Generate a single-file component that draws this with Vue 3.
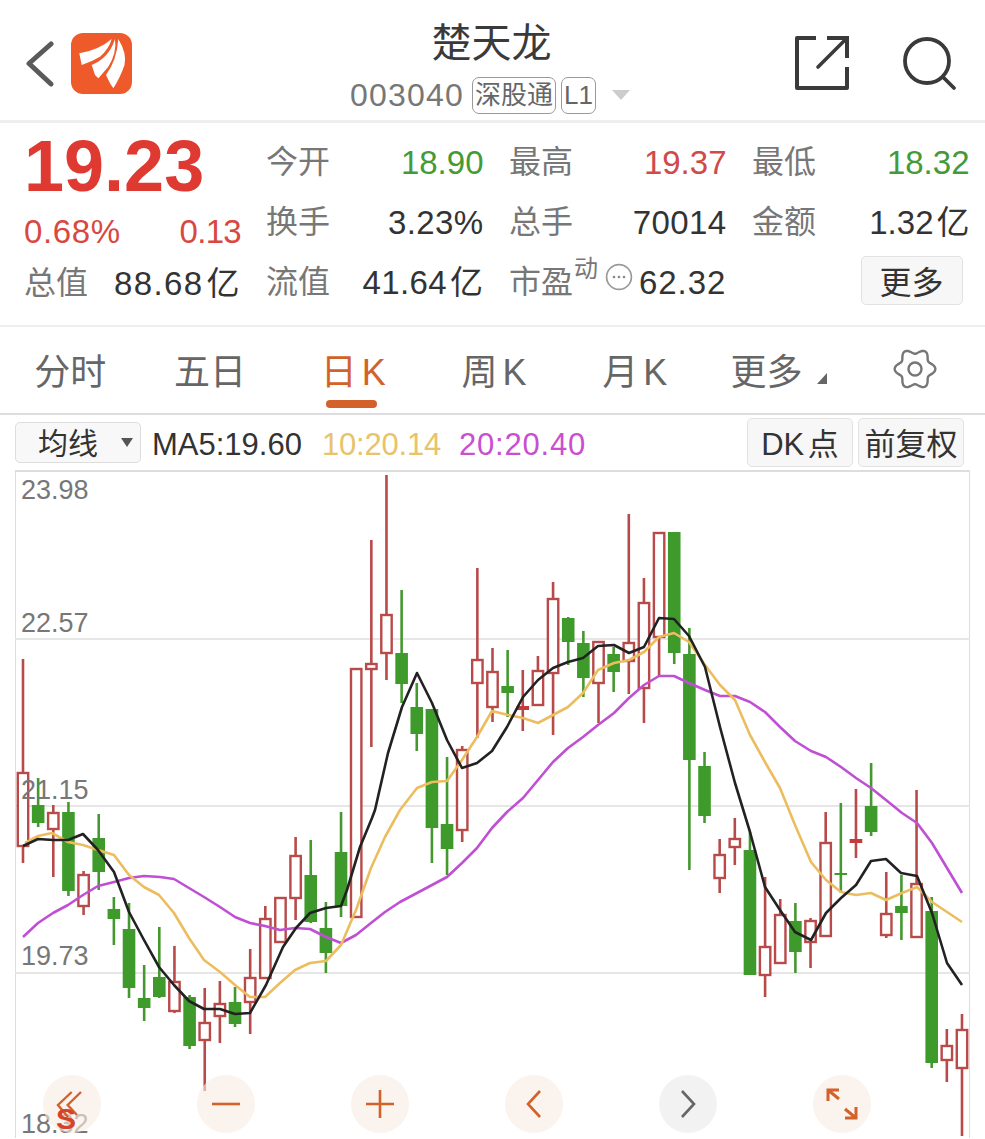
<script setup>
// high, bodyTop, bodyBottom, low, kind (0 green, 1 hollow red, 2 solid red)
const raw = [
  [659, 773, 846, 863, 1], [778, 805, 823, 827, 0], [805, 813, 829, 877, 1], [802, 812, 891, 896, 0],
  [871, 875, 906, 915, 1], [814, 838, 872, 890, 0], [897, 909, 919, 945, 0], [903, 929, 988, 998, 0],
  [965, 998, 1008, 1021, 0], [927, 977, 997, 998, 0], [946, 982, 1011, 1013, 1], [995, 997, 1046, 1049, 0],
  [988, 1023, 1040, 1091, 1], [981, 1004, 1016, 1043, 1], [987, 1002, 1024, 1027, 0], [949, 978, 1002, 1034, 1],
  [906, 919, 978, 978, 1], [898, 898, 942, 942, 1], [837, 856, 898, 920, 1], [840, 875, 922, 923, 0],
  [902, 928, 953, 973, 0], [812, 852, 906, 917, 0], [669, 669, 917, 917, 1], [540, 664, 669, 747, 1],
  [475, 615, 653, 680, 1], [590, 653, 684, 703, 0], [683, 707, 734, 751, 0], [709, 709, 828, 863, 0],
  [757, 824, 849, 875, 0], [746, 750, 830, 842, 1], [568, 660, 683, 738, 1], [648, 672, 707, 722, 1],
  [650, 686, 693, 717, 0], [670, 706, 710, 731, 2], [656, 671, 705, 705, 1], [582, 599, 673, 735, 1],
  [617, 618, 642, 665, 0], [631, 643, 678, 697, 0], [642, 642, 683, 723, 1], [647, 654, 672, 692, 0],
  [514, 643, 661, 694, 1], [578, 603, 688, 723, 1], [532, 533, 637, 676, 1], [532, 532, 653, 664, 0],
  [628, 654, 760, 870, 0], [752, 766, 816, 823, 0], [839, 855, 878, 893, 1], [818, 839, 847, 865, 1],
  [832, 850, 975, 975, 0], [877, 947, 975, 997, 1], [899, 915, 963, 963, 1], [903, 921, 952, 973, 0],
  [918, 921, 942, 968, 1], [812, 843, 936, 936, 1], [803, 873, 875, 893, 0], [789, 839, 843, 858, 2],
  [763, 806, 832, 836, 0], [872, 914, 935, 938, 1], [875, 906, 913, 940, 0], [790, 884, 937, 937, 1],
  [897, 911, 1063, 1068, 0], [1029, 1046, 1060, 1082, 1], [1014, 1030, 1068, 1136, 1],
]

const STEP = 15.145
const candles = raw.map((c, i) => ({
  x: 23 + STEP * i,
  high: c[0],
  top: c[1],
  bottom: c[2],
  low: c[3],
  kind: c[4] === 0 ? 'down' : c[4] === 2 ? 'solid' : 'up',
}))

const ma5 = '23,846 38,839 53,840 68,840 83,834 98,850 114,872 129,912 144,940 159,967 174,985 189,1001 204,1009 220,1009 235,1014 250,1013 266,985 283,947 296,928 310,913 326,908 341,906 347,890 360,847 372,818 375,810 388,753 402,707 417,673 432,703 447,740 462,768 477,763 492,751 507,727 523,697 538,680 553,668 568,662 583,658 598,646 614,645 629,653 644,647 659,618 674,619 689,636 705,667 720,727 735,783 750,832 765,887 780,910 795,932 811,940 826,913 841,898 856,885 871,861 886,859 901,873 917,876 932,913 947,963 962,985'
const ma10 = '25,843 38,836 52,833 68,842 83,845 98,850 114,855 129,875 144,887 159,895 174,913 189,938 204,960 220,972 235,985 250,997 265,997 280,983 295,970 310,963 326,961 341,945 356,910 371,868 385,837 400,810 417,788 432,782 447,781 462,760 477,737 492,711 508,715 523,718 538,723 553,715 568,707 583,693 598,670 614,663 629,660 644,652 659,637 674,633 689,642 705,665 720,685 735,700 750,735 765,762 780,788 795,825 811,862 826,880 841,892 856,895 871,893 886,900 902,893 917,887 932,902 947,912 962,922'
const ma20 = '23,937 38,923 53,913 68,905 83,895 98,886 114,882 129,878 144,876 160,877 174,879 189,888 204,897 220,907 235,917 250,923 265,926 280,930 295,928 310,929 326,937 341,943 356,935 371,923 385,912 400,902 417,893 432,885 447,877 462,863 477,848 492,828 507,812 523,798 538,780 553,762 568,748 583,737 598,725 614,713 629,698 644,685 659,676 674,676 689,683 705,690 720,696 735,696 750,702 765,712 780,727 795,741 811,751 826,757 841,767 856,778 871,788 886,800 902,813 917,823 932,843 947,868 962,893'

const grid = [639, 806, 973]
const axis = [
  { y: 499, label: '23.98' },
  { y: 632, label: '22.57' },
  { y: 799, label: '21.15' },
  { y: 965, label: '19.73' },
  { y: 1133, label: '18.32' },
]

// six soft lobes around the centre of the settings icon
function gearPath() {
  const pts = []
  for (let a = 0; a < 360; a += 5) {
    const t = (a * Math.PI) / 180
    const r = 17.8 + 2.6 * Math.cos(6 * t)
    pts.push((22 + r * Math.cos(t)).toFixed(2) + ' ' + (20 + r * Math.sin(t)).toFixed(2))
  }
  return 'M' + pts.join(' L') + ' Z'
}
const gear = gearPath()
</script>

<template>
  <div class="page">
    <header class="head">
      <svg class="back" width="30" height="48" viewBox="0 0 30 48">
        <path d="M27 4 L5 23.5 L27 44" fill="none" stroke="#5a5a5a" stroke-width="5" stroke-linecap="round" stroke-linejoin="round" />
      </svg>
      <svg class="logo" width="61" height="61" viewBox="0 0 61 61">
        <rect width="61" height="61" rx="12" fill="#ef5a2a" />
        <path d="M8.3 20.3 Q28 17 40.7 6 Q38 16 29 23.7 Q20 29 10.7 32 Z" fill="#fff" />
        <path d="M20.7 32 Q38 25 44 6 Q46 20 37.3 33.7 Q32 40 27.3 45.3 L24 42 Z" fill="#fff" />
        <path d="M35 42 Q46 27 47.3 6 Q56 20 53.5 32 Q49 45 42.3 55.3 L39 50.3 Z" fill="#fff" />
      </svg>
      <div class="title">
        <div class="name">楚天龙</div>
        <div class="code">
          <span class="num">003040</span>
          <span class="tag">深股通</span>
          <span class="tag">L1</span>
          <i class="caret"></i>
        </div>
      </div>
      <svg class="share" width="56" height="56" viewBox="0 0 56 56">
        <path d="M22 3 H3 V53 H53 V32" fill="none" stroke="#3a3a3a" stroke-width="4" stroke-linejoin="round" />
        <path d="M33 3 H53 V23" fill="none" stroke="#3a3a3a" stroke-width="4" />
        <path d="M52 4 L24 32" fill="none" stroke="#3a3a3a" stroke-width="3.6" stroke-linecap="round" />
      </svg>
      <svg class="search" width="58" height="58" viewBox="0 0 58 58">
        <circle cx="24" cy="28" r="22" fill="none" stroke="#3a3a3a" stroke-width="3.8" />
        <path d="M41 45 L51 55" fill="none" stroke="#3a3a3a" stroke-width="3.8" stroke-linecap="round" />
      </svg>
    </header>

    <section class="quote">
      <div class="main">
        <div class="price">19.23</div>
        <div class="change"><span class="pct">0.68%</span><span class="abs">0.13</span></div>
        <div class="cell total"><label>总值</label><b>88.68<span class="yi">亿</span></b></div>
      </div>
      <div class="stats">
        <div class="cell"><label>今开</label><b class="green">18.90</b></div>
        <div class="cell"><label>最高</label><b class="red">19.37</b></div>
        <div class="cell"><label>最低</label><b class="green">18.32</b></div>
        <div class="cell"><label>换手</label><b class="wide">3.23%</b></div>
        <div class="cell"><label>总手</label><b class="wide">70014</b></div>
        <div class="cell"><label>金额</label><b>1.32<span class="yi">亿</span></b></div>
        <div class="cell"><label>流值</label><b class="wide">41.64<span class="yi">亿</span></b></div>
        <div class="cell">
          <label>市盈</label>
          <span class="pe">
            <sup>动</sup>
            <svg width="28" height="28" viewBox="0 0 28 28">
              <circle cx="14" cy="14" r="12.4" fill="none" stroke="#999" stroke-width="1.7" />
              <circle cx="9" cy="14" r="1.3" fill="#888" />
              <circle cx="14" cy="14" r="1.3" fill="#888" />
              <circle cx="19" cy="14" r="1.3" fill="#888" />
            </svg>
          </span>
          <b class="pe-val">62.32</b>
        </div>
        <div class="cell end"><button class="more">更多</button></div>
      </div>
    </section>

    <nav class="tabs">
      <div class="tab">分时</div>
      <div class="tab five">五日</div>
      <div class="tab active">日 K</div>
      <div class="tab nudge">周 K</div>
      <div class="tab nudge">月 K</div>
      <div class="tab extra">更多<i class="corner"></i></div>
      <div class="tab">
        <svg width="44" height="40" viewBox="0 0 44 40">
          <path :d="gear" fill="none" stroke="#777" stroke-width="2.4" stroke-linejoin="round" />
          <circle cx="22" cy="20" r="6.5" fill="none" stroke="#777" stroke-width="2.4" />
        </svg>
      </div>
    </nav>

    <div class="tools">
      <div class="select"><span>均线</span><i></i></div>
      <span class="ma black">MA5:19.60</span>
      <span class="ma yellow">10:20.14</span>
      <span class="ma purple">20:20.40</span>
      <button class="btn first">DK 点</button>
      <button class="btn">前复权</button>
    </div>

    <div class="chart">
      <svg width="955" height="668" viewBox="15 471 955 668">
        <line v-for="y in grid" :key="y" x1="15" x2="970" :y1="y" :y2="y" stroke="#e6e6e6" stroke-width="2" />
        <g v-for="(c, i) in candles" :key="i">
          <template v-if="c.kind === 'down'">
            <line :x1="c.x" :x2="c.x" :y1="c.high" :y2="c.low" stroke="#45982f" stroke-width="2.6" />
            <rect :x="c.x - 6.3" :y="c.top" width="12.6" :height="Math.max(c.bottom - c.top, 2)" fill="#3f9a2c" />
          </template>
          <template v-else-if="c.kind === 'solid'">
            <line :x1="c.x" :x2="c.x" :y1="c.high" :y2="c.low" stroke="#b84a4a" stroke-width="2.6" />
            <rect :x="c.x - 6.3" :y="c.top" width="12.6" :height="c.bottom - c.top" fill="#c23c3c" />
          </template>
          <template v-else>
            <line :x1="c.x" :x2="c.x" :y1="c.high" :y2="c.top" stroke="#b84a4a" stroke-width="2.6" />
            <line :x1="c.x" :x2="c.x" :y1="c.bottom" :y2="c.low" stroke="#b84a4a" stroke-width="2.6" />
            <rect :x="c.x - 5.2" :y="c.top" width="10.4" :height="c.bottom - c.top" fill="#fff" stroke="#b84a4a" stroke-width="2.4" />
          </template>
        </g>
        <polyline :points="ma20" fill="none" stroke="#bf4fd3" stroke-width="2.6" stroke-linejoin="round" />
        <polyline :points="ma10" fill="none" stroke="#ecbd5f" stroke-width="2.6" stroke-linejoin="round" />
        <polyline :points="ma5" fill="none" stroke="#222" stroke-width="2.6" stroke-linejoin="round" />
        <text v-for="a in axis" :key="a.label" x="21" :y="a.y" class="axis">{{ a.label }}</text>
      </svg>

      <div class="controls">
        <div class="round">
          <svg width="36" height="34" viewBox="0 0 36 34">
            <path d="M17.7 5 L4 18 L14 30 M27 5 L13.7 18 L23 28" fill="none" stroke="#d2622a" stroke-width="2.4" />
          </svg>
          <span class="s">S</span>
        </div>
        <div class="round">
          <svg width="30" height="30" viewBox="0 0 30 30"><path d="M1 15 H29" stroke="#d2622a" stroke-width="2.6" /></svg>
        </div>
        <div class="round">
          <svg width="30" height="30" viewBox="0 0 30 30"><path d="M1 15 H29 M15 1 V29" stroke="#d2622a" stroke-width="2.6" /></svg>
        </div>
        <div class="round">
          <svg width="18" height="30" viewBox="0 0 18 30"><path d="M15 2 L3 15 L15 28" fill="none" stroke="#d2622a" stroke-width="2.6" /></svg>
        </div>
        <div class="round gray">
          <svg width="18" height="30" viewBox="0 0 18 30"><path d="M3 2 L15 15 L3 28" fill="none" stroke="#666" stroke-width="2.6" /></svg>
        </div>
        <div class="round">
          <svg width="32" height="32" viewBox="0 0 32 32">
            <path d="M2 13 V2 H13 M2 2 L13 11 M30 19 V30 H19 M30 30 L19 21" fill="none" stroke="#d2622a" stroke-width="3" />
          </svg>
        </div>
      </div>
    </div>
  </div>
</template>

<style>
html,
body {
  background: #fff;
  overflow: hidden;
}
</style>

<style scoped>
.page {
  width: 985px;
  height: 1139px;
  overflow: hidden;
  background: #fff;
  font-family: "Liberation Sans", "Noto Sans CJK SC", sans-serif;
  color: #333;
}

.head {
  position: relative;
  height: 120px;
  border-bottom: 3px solid #eee;
  display: flex;
  align-items: flex-start;
}

.back {
  margin: 40px 0 0 24px;
}

.logo {
  margin: 33px 0 0 17px;
}

.title {
  width: 580px;
  margin-left: 68px;
  text-align: center;
}

.name {
  margin-top: 20px;
  padding-left: 3px;
  font-size: 40px;
  line-height: 46px;
  color: #3a3a3a;
}

.code {
  margin-top: 10px;
  display: flex;
  justify-content: center;
  align-items: center;
  gap: 5px;
  height: 38px;
}

.num {
  font-size: 32px;
  letter-spacing: 1.2px;
  color: #777;
  margin-right: 3px;
}

.tag {
  border: 1px solid #999;
  border-radius: 7px;
  font-size: 26px;
  line-height: 35px;
  padding: 0 2px;
  color: #666;
}

.caret {
  width: 0;
  height: 0;
  margin-left: 11px;
  border: 9px solid transparent;
  border-top: 10px solid #ccc;
  border-bottom: 0;
}

.share {
  margin: 35px 0 0 14px;
}

.search {
  margin: 33px 0 0 53px;
}

.quote {
  display: flex;
  height: 202px;
  padding: 0 15px 0 24px;
  border-bottom: 2px solid #eee;
}

.main {
  width: 217px;
  margin-right: 25px;
}

.price {
  margin-top: 4px;
  height: 78px;
  font-size: 72px;
  line-height: 78px;
  font-weight: 700;
  color: #df3a31;
}

.change {
  display: flex;
  justify-content: space-between;
  margin-top: 6px;
  font-size: 33px;
  line-height: 42px;
  color: #d9483f;
}

.pct {
  letter-spacing: 0.6px;
}

.abs {
  letter-spacing: -0.7px;
}

.stats {
  flex: 1;
  display: grid;
  grid-template-columns: repeat(3, 217.5px);
  grid-template-rows: 60px 60px 60px;
  column-gap: 25.5px;
  padding-top: 10px;
}

.cell {
  display: flex;
  align-items: center;
  justify-content: space-between;
  height: 60px;
}

.cell label {
  margin-bottom: 2px;
  font-size: 32px;
  line-height: 40px;
  color: #777;
}

.cell b {
  font-size: 33px;
  line-height: 40px;
  font-weight: 400;
  color: #333;
}

.yi {
  margin-left: 3px;
}

.total {
  margin-top: 1px;
}

.total b {
  letter-spacing: 1.4px;
}

.cell .wide {
  letter-spacing: 0.4px;
}

.cell .green {
  color: #439a37;
}

.cell .red {
  color: #cf4a48;
}

.pe {
  display: flex;
  align-items: flex-start;
  width: 64px;
  height: 50px;
}

.pe sup {
  font-size: 24px;
  line-height: 26px;
  margin-top: -2px;
  color: #777;
}

.pe svg {
  margin-top: 5px;
  margin-left: 7px;
}

.pe-val {
  letter-spacing: 1px;
}

.end {
  justify-content: flex-end;
}

.more {
  width: 102px;
  height: 49px;
  margin: 0 7px 6px 0;
  padding: 0;
  font: inherit;
  font-size: 32px;
  color: #333;
  background: #f7f7f7;
  border: 1px solid #e2e2e2;
  border-radius: 5px;
}

.tabs {
  display: grid;
  grid-template-columns: repeat(7, 1fr);
  height: 86px;
  border-bottom: 2px solid #ddd;
}

.tab {
  position: relative;
  display: flex;
  align-items: center;
  justify-content: center;
  font-size: 36px;
  word-spacing: -5px;
  color: #666;
  padding-bottom: 3px;
}

.tab.five {
  padding-right: 2px;
}

.tab.nudge,
.tab.active {
  padding-left: 3px;
}

.tab.extra {
  padding-left: 10px;
}

.tab.active {
  color: #d2622a;
}

.tab.active::after {
  content: "";
  position: absolute;
  left: 50%;
  bottom: 5px;
  width: 51px;
  height: 8px;
  margin-left: -26px;
  border-radius: 4px;
  background: #d2622a;
}

.corner {
  width: 0;
  height: 0;
  margin: 20px 0 0 15px;
  border-left: 10px solid transparent;
  border-bottom: 11px solid #666;
}

.tools {
  display: flex;
  align-items: center;
  height: 55px;
  padding-left: 15px;
}

.select {
  display: flex;
  align-items: center;
  box-sizing: border-box;
  width: 126px;
  height: 41px;
  margin-right: 11px;
  padding-left: 22px;
  font-size: 30px;
  color: #333;
  background: #f8f8f8;
  border: 1px solid #ddd;
  border-radius: 5px;
}

.select span {
  margin-bottom: 4px;
}

.select i {
  width: 0;
  height: 0;
  margin-left: 23px;
  border: 6px solid transparent;
  border-top: 9px solid #555;
  border-bottom: 0;
}

.ma {
  font-size: 31px;
  margin: 4px 20px 0 0;
}

.black {
  color: #333;
}

.yellow {
  color: #e8c36a;
  margin-right: 18px;
  letter-spacing: -0.2px;
}

.purple {
  color: #c94fd0;
  letter-spacing: 0.8px;
}

.btn {
  box-sizing: border-box;
  width: 106px;
  height: 49px;
  margin-left: 5px;
  padding: 0 0 3px;
  font: inherit;
  font-size: 31px;
  word-spacing: -5px;
  color: #333;
  background: #f7f7f7;
  border: 1px solid #e2e2e2;
  border-radius: 5px;
}

.btn.first {
  margin-left: auto;
}

.tools .btn:last-child {
  margin-right: 21px;
}

.chart {
  position: relative;
  box-sizing: border-box;
  width: 955px;
  height: 668px;
  margin-left: 15px;
  border: solid #ddd;
  border-width: 2px 1px 0;
}

.chart svg {
  display: block;
}

.chart > svg {
  margin: -1px 0 0 -1px;
}

.axis {
  font-family: "Liberation Sans", sans-serif;
  font-size: 27px;
  fill: #777;
}

.controls {
  position: absolute;
  left: 27px;
  top: 603px;
  display: flex;
  gap: 96px;
}

.round {
  position: relative;
  display: flex;
  align-items: center;
  justify-content: center;
  width: 58px;
  height: 58px;
  border-radius: 50%;
  background: rgba(248, 235, 226, 0.62);
}

.round.gray {
  background: rgba(240, 240, 240, 0.85);
}

.s {
  position: absolute;
  left: 13px;
  top: 27px;
  font-size: 30px;
  line-height: 34px;
  font-weight: 700;
  color: #d6432c;
}
</style>
